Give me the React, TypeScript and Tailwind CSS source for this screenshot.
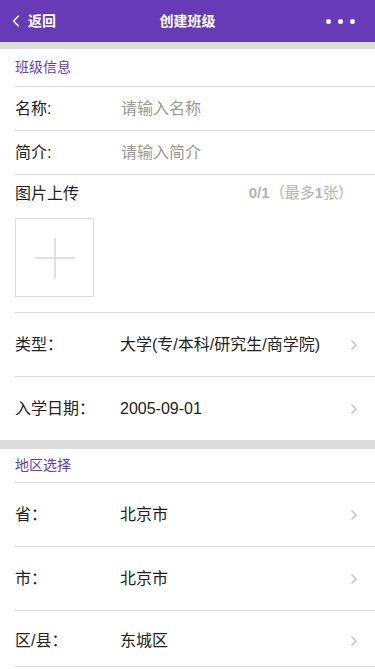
import { ChevronLeft } from "lucide-react";

const font = { fontFamily: '"Liberation Sans", "Noto Sans CJK SC", sans-serif' };

function Chevron() {
  return (
    <svg width="8" height="12" viewBox="0 0 8 12" className="shrink-0">
      <path d="M1.5 1.5 L6 6 L1.5 10.5" fill="none" stroke="#c8c8c8" strokeWidth="1.6" />
    </svg>
  );
}

function SelectRow({ label, value, short }: { label: string; value: string; short?: boolean }) {
  return (
    <div
      className={`flex pr-[17px] text-[16px] text-[#222] border-b border-[#dcdcdc] ${
        short ? "h-[56px] items-start pt-[18px]" : "h-[64px] items-center"
      }`}
    >
      <div className="w-[105px] shrink-0">{label}</div>
      <div className="flex-1">{value}</div>
      <div className={short ? "pt-[6px]" : ""}>
        <Chevron />
      </div>
    </div>
  );
}

function InputRow({ label, placeholder }: { label: string; placeholder: string }) {
  return (
    <div className="flex items-center h-[44px] border-b border-[#dcdcdc] text-[16px]">
      <div className="w-[106px] shrink-0 text-[#222]">{label}</div>
      <input
        className="flex-1 outline-none bg-transparent placeholder:text-[#999] text-[#222]"
        placeholder={placeholder}
        style={font}
      />
    </div>
  );
}

export default function App() {
  return (
    <div className="w-[375px] min-h-[669px] bg-white" style={font}>
      <div className="h-[42px] bg-[#673ab7] flex items-center px-[6px] text-white relative">
        <div className="flex items-center text-[14px] font-bold">
          <ChevronLeft size={20} strokeWidth={1.6} />
          <span className="ml-[2px]">返回</span>
        </div>
        <div className="absolute left-0 right-0 text-center text-[14px] font-bold pointer-events-none">
          创建班级
        </div>
        <div className="ml-auto flex gap-[7px] mr-[14px]">
          <span className="w-[5px] h-[5px] rounded-full bg-white" />
          <span className="w-[5px] h-[5px] rounded-full bg-white" />
          <span className="w-[5px] h-[5px] rounded-full bg-white" />
        </div>
      </div>
      <div className="h-[7px] bg-[#dcdcdc]" />

      <div className="pl-[15px]">
        <div className="h-[38px] flex items-center border-b border-[#dcdcdc] text-[14px] text-[#673ab7]">
          班级信息
        </div>
        <InputRow label="名称:" placeholder="请输入名称" />
        <InputRow label="简介:" placeholder="请输入简介" />
        <div className="border-b border-[#dcdcdc] pb-[15px]">
          <div className="h-[37px] flex items-center justify-between pr-[22px]">
            <span className="text-[16px] text-[#222]">图片上传</span>
            <span className="text-[15px] text-[#b3b3b3]">
              <span className="font-bold">0/1</span>（最多<span className="font-bold">1</span>张）
            </span>
          </div>
          <div className="mt-[6px] w-[79px] h-[79px] border border-[#dcdcdc] flex items-center justify-center">
            <svg width="40" height="40" viewBox="0 0 40 40">
              <path d="M20 0 V40 M0 20 H40" stroke="#d6d6d6" strokeWidth="1.5" />
            </svg>
          </div>
        </div>
        <SelectRow label="类型：" value="大学(专/本科/研究生/商学院)" />
        <div className="flex items-center h-[63px] pr-[17px] text-[16px] text-[#222]">
          <div className="w-[105px] shrink-0">入学日期：</div>
          <div className="flex-1">2005-09-01</div>
          <Chevron />
        </div>
      </div>

      <div className="h-[9px] bg-[#dcdcdc]" />

      <div className="pl-[15px]">
        <div className="h-[34px] flex items-center border-b border-[#dcdcdc] text-[14px] text-[#673ab7]">
          地区选择
        </div>
        <SelectRow label="省：" value="北京市" />
        <SelectRow label="市：" value="北京市" />
        <SelectRow label="区/县：" value="东城区" short />
      </div>
    </div>
  );
}
